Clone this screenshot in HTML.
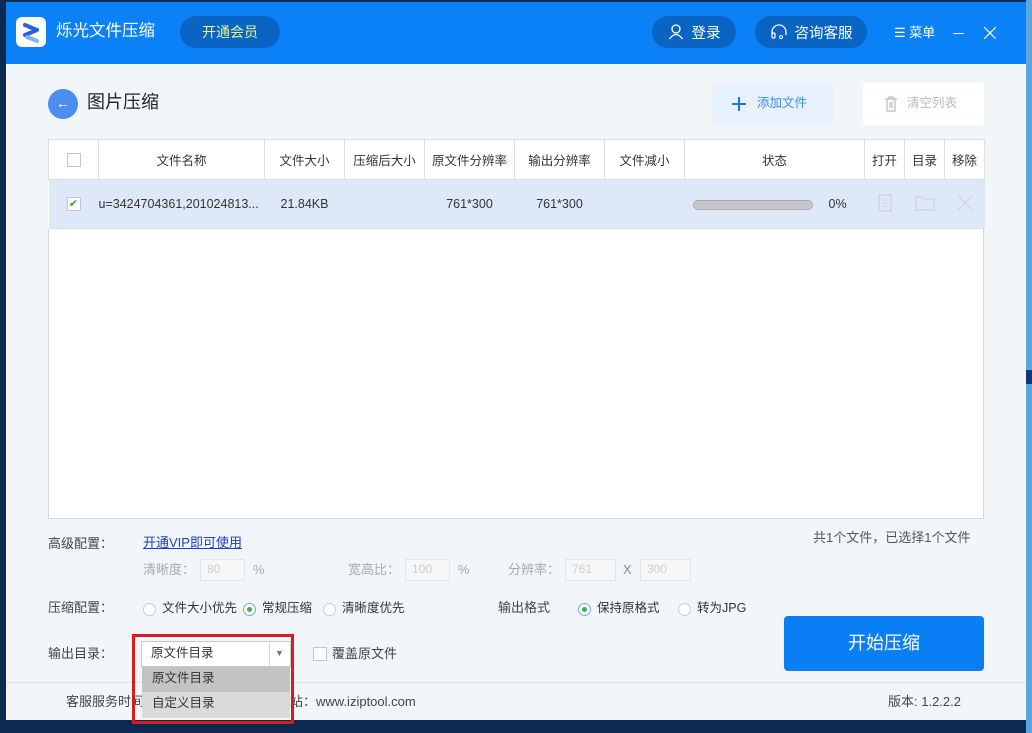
<!DOCTYPE html>
<html><head><meta charset="utf-8">
<style>
*{margin:0;padding:0;box-sizing:border-box}
body{width:1032px;height:733px;overflow:hidden;position:relative;background:#0c2a52;font-family:"Liberation Sans","Noto Sans CJK SC",sans-serif;color:#333}
.abs{position:absolute}
.win{position:absolute;left:6px;top:2px;width:1020px;height:718px;background:#f3f6f9}
.top{position:absolute;left:6px;top:2px;width:1020px;height:62px;background:#0b81f8}
.pill{position:absolute;background:#0a64c4;border-radius:16px;color:#fff;font-size:14.5px;display:flex;align-items:center;justify-content:center}
.t{position:absolute;white-space:nowrap;line-height:1.2}
table{border-collapse:collapse;position:absolute;left:48px;top:139px;background:#fff}
td{border:1px solid #dcdfe4;font-size:12.5px;text-align:center;color:#333;height:40px;padding:0}
tr.r td{background:#dde9f8;height:49px;border-left:none;border-right:none}
.inp{position:absolute;width:45px;height:22px;border:1px solid #e2e5e9;background:#f6f7f9;color:#ccc;font-size:12px;padding:2px 6px}
.rad{position:absolute;width:13px;height:13px;border:1px solid #c9ccd1;border-radius:50%;background:#fff}
.rad.on::after{content:"";position:absolute;left:3px;top:3px;width:5px;height:5px;border-radius:50%;background:#3db34a}
.rad.on{border-color:#7aa8d8}
</style></head><body>
<div class="abs" style="left:1026px;top:0;width:6px;height:733px;background:#5aa6e2"></div>
<div class="abs" style="left:1026px;top:370px;width:6px;height:14px;background:#0c3a78"></div>
<div class="win"></div>
<div class="top"></div>
<div class="abs" style="left:16px;top:17px;width:30px;height:30px;background:#fff;border-radius:6px">
<svg width="30" height="30"><path d="M9 8 L21 13 L9 18" stroke="#2a5de0" stroke-width="4" fill="none" stroke-linecap="round" stroke-linejoin="round"/><path d="M11 20 L21 24" stroke="#7fb3f5" stroke-width="4" stroke-linecap="round"/></svg></div>
<div class="t" style="left:56px;top:22px;font-size:16.5px;color:#fff">烁光文件压缩</div>
<div class="pill" style="left:180px;top:16px;width:100px;height:32px;color:#e6f58a;font-size:14px">开通会员</div>
<div class="pill" style="left:652px;top:16px;width:84px;height:32px"><svg width="16" height="16" style="margin-right:8px"><circle cx="8" cy="5" r="4" stroke="#fff" fill="none" stroke-width="1.3"/><path d="M1.5 15 Q8 6 14.5 15" stroke="#fff" fill="none" stroke-width="1.3"/></svg>登录</div>
<div class="pill" style="left:755px;top:16px;width:112px;height:32px"><svg width="18" height="16" style="margin-right:7px"><path d="M2 11 V8 A7 7 0 0 1 16 8 V11" stroke="#fff" fill="none" stroke-width="1.3"/><rect x="2" y="9" width="3" height="5" rx="1" stroke="#fff" fill="none" stroke-width="1.2"/><circle cx="11" cy="13" r="1.5" stroke="#fff" fill="none"/></svg>咨询客服</div>
<div class="t" style="left:894px;top:25px;font-size:13px;color:#fff">☰ 菜单</div>
<div class="abs" style="left:953px;top:33px;width:11px;height:1px;background:#fff"></div>
<svg class="abs" style="left:984px;top:27px" width="12" height="12"><path d="M0 0L12 12M12 0L0 12" stroke="#fff" stroke-width="1.2"/></svg>
<div class="abs" style="left:48px;top:89px;width:30px;height:30px;border-radius:50%;background:#4a8ef0;color:#fff;font-size:14px;text-align:center;line-height:29px">←</div>
<div class="t" style="left:87px;top:92px;font-size:18px;color:#222">图片压缩</div>
<div class="abs" style="left:712px;top:83px;width:121px;height:42px;background:#e6f1fc;border-radius:3px"></div>
<svg class="abs" style="left:731px;top:96px" width="16" height="16"><path d="M8 1V15M1 8H15" stroke="#1a73e0" stroke-width="2"/></svg>
<div class="t" style="left:757px;top:96px;font-size:12.5px;color:#3b8de8">添加文件</div>
<div class="abs" style="left:863px;top:83px;width:121px;height:42px;background:#fff;border-radius:3px"></div>
<svg class="abs" style="left:884px;top:96px" width="14" height="16"><path d="M1 3H13M5 3V1H9V3M3 3V15H11V3M6 6V12M8 6V12" stroke="#bbb" fill="none" stroke-width="1.2"/></svg>
<div class="t" style="left:907px;top:96px;font-size:12.5px;color:#bbb">清空列表</div>
<div class="abs" style="left:48px;top:139px;width:936px;height:380px;background:#fff;border:1px solid #d3d7dc"></div>
<table>
<tr><td style="width:50px"><div style="width:14px;height:14px;border:1px solid #c3c6ca;margin:auto"></div></td><td style="width:166px">文件名称</td><td style="width:80px">文件大小</td><td style="width:80px">压缩后大小</td><td style="width:90px">原文件分辨率</td><td style="width:90px">输出分辨率</td><td style="width:80px">文件减小</td><td style="width:180px">状态</td><td style="width:40px">打开</td><td style="width:40px">目录</td><td style="width:40px">移除</td></tr>
<tr class="r"><td><div style="width:14px;height:14px;border:1px solid #c3c6ca;background:#fff;margin:auto;color:#3aa33a;font-size:11px;line-height:12px">✔</div></td><td style="text-align:left;padding-left:0">u=3424704361,201024813...</td><td>21.84KB</td><td></td><td>761*300</td><td>761*300</td><td></td><td style="text-align:left;padding-left:8px"><span style="display:inline-block;width:120px;height:10px;border-radius:5px;background:#c7c7cb;border:1px solid #aaa;vertical-align:middle"></span><span style="margin-left:16px">0%</span></td>
<td><svg width="14" height="18"><rect x="1" y="1" width="12" height="16" fill="none" stroke="#cfd6e0" stroke-width="1.5"/><path d="M4 6h6M4 9h6M4 12h6" stroke="#cfd6e0"/></svg></td>
<td><svg width="20" height="16"><path d="M1 2h6l2 2h10v11H1z" fill="none" stroke="#cfd6e0" stroke-width="1.5"/></svg></td>
<td><svg width="16" height="16"><path d="M1 1l14 14M15 1L1 15" stroke="#cfd6e0" stroke-width="1.5"/></svg></td></tr>
</table>
<div class="t" style="left:48px;top:536px;font-size:13px;color:#444">高级配置：</div>
<div class="t" style="left:143px;top:535px;font-size:13px;color:#1a3fc8;text-decoration:underline">开通VIP即可使用</div>
<div class="t" style="left:813px;top:530px;font-size:13px;color:#555">共1个文件，已选择1个文件</div>
<div class="t" style="left:143px;top:562px;font-size:13px;color:#aaa">清晰度：</div><div class="inp" style="left:200px;top:559px">80</div><div class="t" style="left:253px;top:562px;font-size:13px;color:#aaa">%</div>
<div class="t" style="left:348px;top:562px;font-size:13px;color:#aaa">宽高比：</div><div class="inp" style="left:405px;top:559px">100</div><div class="t" style="left:458px;top:562px;font-size:13px;color:#aaa">%</div>
<div class="t" style="left:508px;top:562px;font-size:13px;color:#aaa">分辨率：</div><div class="inp" style="left:565px;top:559px;width:51px">761</div><div class="t" style="left:623px;top:562px;font-size:13px;color:#888">X</div><div class="inp" style="left:640px;top:559px;width:51px">300</div>
<div class="t" style="left:48px;top:600px;font-size:13px;color:#444">压缩配置：</div>
<div class="rad" style="left:143px;top:603px"></div><div class="t" style="left:162px;top:601px;font-size:12.5px">文件大小优先</div>
<div class="rad on" style="left:243px;top:603px"></div><div class="t" style="left:262px;top:601px;font-size:12.5px">常规压缩</div>
<div class="rad" style="left:323px;top:603px"></div><div class="t" style="left:342px;top:601px;font-size:12.5px">清晰度优先</div>
<div class="t" style="left:498px;top:600px;font-size:13px;color:#444">输出格式</div>
<div class="rad on" style="left:578px;top:603px"></div><div class="t" style="left:597px;top:601px;font-size:12.5px">保持原格式</div>
<div class="rad" style="left:678px;top:603px"></div><div class="t" style="left:697px;top:601px;font-size:12.5px">转为JPG</div>
<div class="abs" style="left:784px;top:616px;width:200px;height:55px;background:#0a7ff5;border-radius:4px;color:#fff;font-size:18px;text-align:center;line-height:55px">开始压缩</div>
<div class="t" style="left:48px;top:646px;font-size:13px;color:#444">输出目录：</div>
<div class="abs" style="left:313px;top:647px;width:14px;height:14px;border:1px solid #c3c6ca;background:#fff"></div>
<div class="t" style="left:332px;top:646px;font-size:13px;color:#444">覆盖原文件</div>
<div class="abs" style="left:6px;top:682px;width:1020px;height:1px;background:#dcdfe3"></div>
<div class="t" style="left:66px;top:694px;font-size:13px;color:#444">客服服务时间</div>
<div class="t" style="left:290px;top:694px;font-size:13px;color:#444">站：www.iziptool.com</div>
<div class="t" style="left:888px;top:694px;font-size:13px;color:#444">版本: 1.2.2.2</div>
<div class="abs" style="left:132px;top:634px;width:162px;height:90px;border:3px solid #d11f1f"></div>
<div class="abs" style="left:141px;top:641px;width:150px;height:26px;background:#fff;border:1px solid #c9c9c9"></div>
<div class="abs" style="left:269px;top:642px;width:1px;height:24px;background:#ddd"></div>
<div class="t" style="left:275px;top:648px;font-size:9px;color:#777">▼</div>
<div class="t" style="left:151px;top:646px;font-size:12.5px;color:#333">原文件目录</div>
<div class="abs" style="left:142px;top:667px;width:148px;height:25px;background:#c3c3c3"></div>
<div class="abs" style="left:142px;top:692px;width:148px;height:26px;background:#dadada"></div>
<div class="t" style="left:152px;top:671px;font-size:12.5px;color:#333">原文件目录</div>
<div class="t" style="left:152px;top:696px;font-size:12.5px;color:#333">自定义目录</div>
</body></html>
